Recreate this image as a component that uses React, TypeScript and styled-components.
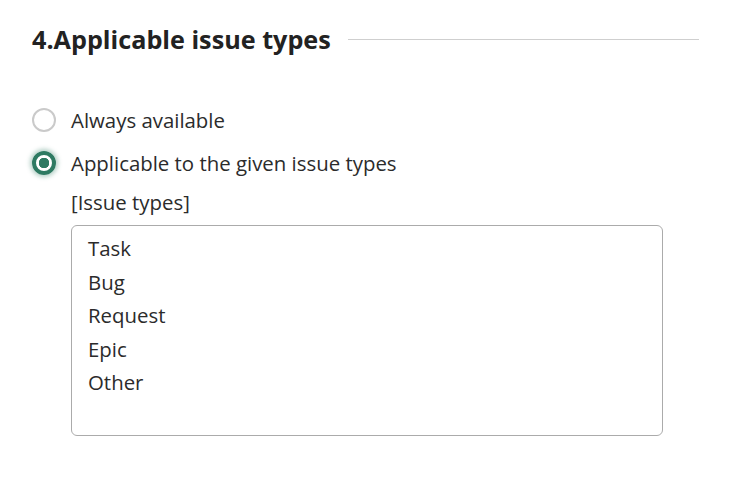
import styled, { createGlobalStyle } from "styled-components";

const GlobalStyle = createGlobalStyle`
  body {
    margin: 0;
    background: #fff;
    font-family: "Open Sans", "Noto Sans", sans-serif;
    color: #2b2b2b;
  }
`;

const issueTypes = ["Task", "Bug", "Request", "Epic", "Other"];

export default function App() {
  return (
    <>
      <GlobalStyle />
      <Section>
        <Header>
          <Title>4.Applicable issue types</Title>
          <Rule />
        </Header>
        <Options>
          <Option>
            <Radio />
            <span>Always available</span>
          </Option>
          <Option>
            <Radio checked />
            <span>Applicable to the given issue types</span>
          </Option>
        </Options>
        <Sub>
          <FieldLabel>[Issue types]</FieldLabel>
          <ListBox>
            {issueTypes.map((t) => (
              <Item key={t}>{t}</Item>
            ))}
          </ListBox>
        </Sub>
      </Section>
    </>
  );
}

const Section = styled.section`
  width: 667px;
  padding: 22px 0 0 32px;
`;

const Header = styled.div`
  display: flex;
  align-items: center;
  gap: 17px;
`;

const Title = styled.h2`
  margin: 0;
  font-size: 25.2px;
  font-weight: 700;
  color: #222;
  white-space: nowrap;
`;

const Rule = styled.div`
  flex: 1;
  height: 1px;
  background: #cfcfcf;
`;

const Options = styled.div`
  margin-top: 50px;
  display: flex;
  flex-direction: column;
  gap: 15px;
`;

const Option = styled.label`
  display: flex;
  align-items: center;
  gap: 15px;
  font-size: 20.4px;
  line-height: 28px;
  color: #2b2b2b;
`;

const Radio = styled.span<{ checked?: boolean }>`
  box-sizing: border-box;
  width: 24px;
  height: 24px;
  border-radius: 50%;
  border: ${(p) => (p.checked ? "4px solid #2e7a62" : "2px solid #cacaca")};
  background: ${(p) =>
    p.checked ? "radial-gradient(circle, #2e7a62 0 5px, #fff 5.5px)" : "#fff"};
  box-shadow: ${(p) => (p.checked ? "0 0 4px 2px rgba(46,122,98,0.35)" : "none")};
  flex-shrink: 0;
`;

const Sub = styled.div`
  padding-left: 39px;
  margin-top: 11px;
`;

const FieldLabel = styled.div`
  font-size: 20.4px;
  line-height: 28px;
  color: #2b2b2b;
`;

const ListBox = styled.div`
  box-sizing: border-box;
  margin-top: 9px;
  width: 592px;
  height: 211px;
  border: 1px solid #ababab;
  border-radius: 6px;
  padding: 6px 16px;
  display: flex;
  flex-direction: column;
`;

const Item = styled.div`
  font-size: 20.4px;
  line-height: 33.5px;
  color: #2b2b2b;
`;
